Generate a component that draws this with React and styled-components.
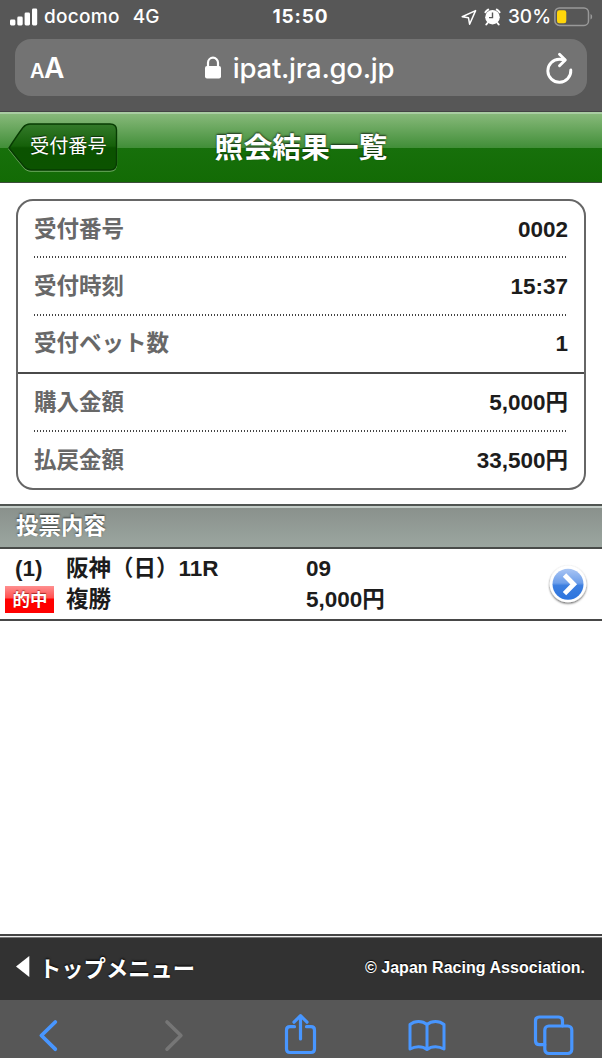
import React from "react";
import styled, { createGlobalStyle } from "styled-components";

const Global = createGlobalStyle`
  * { box-sizing: border-box; }
  html, body { margin: 0; padding: 0; background: #fff; }
  svg { display: block; flex: none; }
`;

const Screen = styled.div`
  width: 602px;
  height: 1058px;
  display: flex;
  flex-direction: column;
  overflow: hidden;
  background: #fff;
  color: #1c1c1c;
  font-family: "Liberation Sans", "Noto Sans CJK JP", sans-serif;
`;

const BrowserTop = styled.div`
  flex: none;
  height: 112px;
  background: #575757;
  border-bottom: 1px solid #444;
  color: #fff;
  font-family: Inter, sans-serif;
`;

const StatusBar = styled.div`
  height: 39px;
  padding: 0 9px 5px 10px;
  display: grid;
  grid-template-columns: 1fr auto 1fr;
  align-items: center;
  font-size: 19px;
  line-height: 24px;
  font-weight: 500;
`;

const StatusGroup = styled.div`
  display: flex;
  align-items: center;
  justify-content: ${(p) => (p.$end ? "flex-end" : "flex-start")};
`;

const StatusText = styled.span`
  margin-left: ${(p) => p.$gap || 0}px;
  letter-spacing: ${(p) => p.$track || 0}px;
  font-weight: ${(p) => (p.$bold ? 700 : 500)};
  white-space: nowrap;
`;

const Clock = styled(StatusText)`
  padding-right: 2px;
`;

const AddressBar = styled.div`
  height: 57px;
  margin: 0 15px;
  padding: 0 14px 0 15px;
  border-radius: 16px;
  background: #737373;
  display: grid;
  grid-template-columns: 60px 1fr 60px;
  align-items: center;
`;

const TextSize = styled.div`
  display: flex;
  align-items: baseline;
  padding-top: 4px;
  font-weight: 600;
  font-size: 28px;
  line-height: 34px;
  letter-spacing: -0.5px;
`;

const SmallA = styled.span`
  font-size: 20px;
`;

const Host = styled.div`
  display: flex;
  align-items: center;
  justify-content: center;
  gap: 12px;
  padding-right: 4px;
  font-size: 27.5px;
  line-height: 36px;
  font-weight: 500;
  letter-spacing: -0.25px;
`;

const Reload = styled.div`
  display: flex;
  justify-content: flex-end;
`;

const Header = styled.header`
  flex: none;
  height: 71px;
  padding-left: 8px;
  border-top: 2px solid #a9cda2;
  border-bottom: 1px solid #3c4c3a;
  background: linear-gradient(#87b97a 0, #418e38 34px, #17700b 34px, #136b05 100%);
  display: grid;
  grid-template-columns: 110px 1fr 118px;
  align-items: center;
`;

const BackButton = styled.button`
  position: relative;
  width: 110px;
  height: 49px;
  margin: 0 0 2px;
  padding: 0;
  border: 0;
  background: none;
  color: #fff;
`;

const BackLabel = styled.span`
  position: absolute;
  left: 22px;
  top: 8px;
  font: 400 19.2px/28px "Noto Sans CJK JP", sans-serif;
  text-shadow: 0 -1px 1px rgba(0, 0, 0, 0.6);
  white-space: nowrap;
`;

const Title = styled.h1`
  margin: 0;
  padding-bottom: 4px;
  text-align: center;
  color: #fff;
  font: 700 28.8px/42px "Noto Sans CJK JP", sans-serif;
  text-shadow: 0 -1px 2px rgba(0, 0, 0, 0.7);
`;

const Summary = styled.dl`
  flex: none;
  height: 291px;
  margin: 16px 16px 14px;
  border: 2px solid #666;
  border-radius: 17px;
`;

const SummaryRow = styled.div`
  height: ${(p) => (p.$first || p.$last ? 57 : 58)}px;
  padding: 0 ${(p) => (p.$divider ? 16 : 0)}px;
  margin: 0 ${(p) => (p.$divider ? 0 : 16)}px;
  border-bottom: ${(p) => (p.$divider ? "2px solid #4a4a4a" : "0")};
  background: ${(p) =>
    p.$last || p.$divider
      ? "none"
      : "linear-gradient(90deg, #444 50%, transparent 50%) 0 100% / 3px 2px repeat-x"};
  display: flex;
  justify-content: space-between;
  align-items: center;
  font-size: 22.5px;
  font-weight: 700;
`;

const Term = styled.dt`
  color: #686868;
  line-height: 34px;
`;

const Value = styled.dd`
  margin: 0;
  line-height: 34px;
`;

const SectionBar = styled.h2`
  flex: none;
  margin: 0;
  height: 45px;
  padding: 0 16px;
  border-top: 2px solid #505552;
  border-bottom: 2px solid #484b49;
  box-shadow: inset 0 2px 0 #c3ccc7;
  background: linear-gradient(#89908b, #9ba6a0);
  color: #fff;
  font: 700 22.5px/37px "Noto Sans CJK JP", sans-serif;
  text-shadow: 0 -1px 2px rgba(0, 0, 0, 0.6);
`;

const BetRow = styled.div`
  flex: none;
  height: 72px;
  padding: 4px 12px 4px 5px;
  border-bottom: 2px solid #484848;
  display: grid;
  grid-template-columns: 61px 240px 1fr 44px;
  grid-template-rows: 31px 31px;
  align-items: center;
  font-size: 22.5px;
  line-height: 30px;
  font-weight: 700;
  white-space: pre;
`;

const BetIndex = styled.div`
  padding-left: 10px;
`;

const HitBadge = styled.div`
  width: 49px;
  height: 27px;
  padding-left: 1px;
  color: #fff;
  background: linear-gradient(#ff8f8f 0, #ff5050 12px, #f00 13px, #f00 100%);
  text-align: center;
  font: 700 17.5px/26px "Noto Sans CJK JP", sans-serif;
  text-shadow: 0 -1px 1px rgba(120, 0, 0, 0.6);
`;

const DetailLink = styled.div`
  grid-column: 4;
  grid-row: 1 / 3;
  padding-top: 2px;
`;

const Spacer = styled.div`
  flex: 1;
`;

const Footer = styled.footer`
  flex: none;
  height: 66px;
  padding: 0 17px 0 16px;
  border-top: 2px solid #444;
  box-shadow: inset 0 1px 0 #eee, inset 0 2px 0 #777;
  background: #323232;
  color: #fff;
  display: flex;
  align-items: center;
  justify-content: space-between;
`;

const TopMenu = styled.div`
  display: flex;
  align-items: center;
  gap: 9px;
  padding-bottom: 3px;
  font: 700 22.3px/34px "Noto Sans CJK JP", sans-serif;
  text-shadow: 0 -1px 2px #000;
`;

const Copyright = styled.small`
  font-size: 16px;
  font-weight: 700;
  line-height: 22px;
  padding-bottom: 1px;
  letter-spacing: 0.03px;
  text-shadow: 0 -1px 1px #000;
`;

const Toolbar = styled.nav`
  flex: none;
  height: 58px;
  padding: 12px 28px 0 28px;
  background: #575757;
  display: flex;
  justify-content: space-between;
`;

const ToolIcon = ({ children, color = "#4896ff", width = 3.2 }) => (
  <svg width="42" height="46" viewBox="0 0 42 46" fill="none" stroke={color} strokeWidth={width} strokeLinecap="round" strokeLinejoin="round">
    {children}
  </svg>
);

const SignalIcon = () => (
  <svg width="28" height="18" viewBox="0 0 28 18" fill="#fff">
    <rect x="0" y="11.500" width="5.400" height="6" rx="1.400" />
    <rect x="7.300" y="8.500" width="5.400" height="9" rx="1.400" />
    <rect x="14.600" y="4.500" width="5.400" height="13" rx="1.400" />
    <rect x="22" y="0.500" width="5.200" height="17" rx="1.400" />
  </svg>
);

const LocationIcon = () => (
  <svg width="16" height="17" viewBox="0 0 16 17" fill="none" stroke="#fff" strokeWidth="1.5" strokeLinejoin="round">
    <path d="M14.600 1.600 1.200 7.800 7.500 8.800 8.600 15.200Z" />
  </svg>
);

const AlarmIcon = () => (
  <svg width="17" height="18" viewBox="0 0 17 18">
    <circle cx="8.500" cy="9.200" r="7.300" fill="#fff" />
    <path d="M1.400 4.200A8 8 0 0 1 4.200 1.600M15.600 4.200A8 8 0 0 0 12.800 1.600M3.500 15 2.300 16.500M13.500 15 14.700 16.500" stroke="#fff" strokeWidth="2" strokeLinecap="round" fill="none" />
    <path d="M8.500 4.600V9.600H5" stroke="#575757" strokeWidth="1.400" fill="none" />
  </svg>
);

const BatteryIcon = () => (
  <svg width="39" height="20" viewBox="0 0 39 20">
    <rect x="0.900" y="0.900" width="33.600" height="17.500" rx="4.500" fill="none" stroke="#999" strokeWidth="1.5" />
    <rect x="3" y="3.200" width="9.300" height="13" rx="2.200" fill="#ffd60a" />
    <path d="M36.500 7v5.400c2.200-.6 2.200-4.800 0-5.400Z" fill="#999" />
  </svg>
);

const LockIcon = () => (
  <svg width="16" height="24" viewBox="0 0 16 24">
    <rect x="0" y="10" width="16" height="12.600" rx="2" fill="#fff" />
    <path d="M3 11V6.700a5 5 0 0 1 10 0V11" fill="none" stroke="#fff" strokeWidth="2.200" />
  </svg>
);

const ReloadIcon = () => (
  <svg width="28" height="32" viewBox="0 0 28 32" fill="none" stroke="#fff" strokeWidth="2.900" strokeLinecap="round" strokeLinejoin="round">
    <path d="M25.800 18A11.500 11.500 0 1 1 14.300 7.200Q17.200 7.200 19.700 7.900" />
    <path d="M14.500 2.200 20.300 8 14.500 13.800" />
  </svg>
);

const BackShape = () => (
  <svg width="110" height="49" viewBox="0 0 110 49">
    <defs>
      <linearGradient id="back-fill" x1="0" y1="0" x2="0" y2="1">
        <stop offset="0" stopColor="#347a2a" />
        <stop offset="0.48" stopColor="#156009" />
        <stop offset="0.52" stopColor="#0b5200" />
        <stop offset="1" stopColor="#0b5300" />
      </linearGradient>
    </defs>
    <path d="M1 26Q9 13.500 15 5.500 18 2 22 2H102Q108.500 2 108.500 8V41Q108.500 48 102 48H23Q19 48 16 44.500 8 35 1 26Z" fill="none" stroke="#72ac65" strokeWidth="1.400" />
    <path d="M1 25Q9 12.500 15 4.500 18 1 22 1H102Q108.500 1 108.500 7V40Q108.500 47 102 47H23Q19 47 16 43.500 8 34 1 25Z" fill="url(#back-fill)" stroke="#073b02" strokeWidth="1.400" />
  </svg>
);

const DetailIcon = () => (
  <svg width="44" height="44" viewBox="0 0 44 44">
    <defs>
      <linearGradient id="detail-fill" x1="0" y1="0" x2="0" y2="1">
        <stop offset="0" stopColor="#a9c5f4" />
        <stop offset="0.46" stopColor="#6e9fea" />
        <stop offset="0.54" stopColor="#3d7fe0" />
        <stop offset="1" stopColor="#2c74de" />
      </linearGradient>
      <filter id="detail-shadow" x="-20%" y="-20%" width="140%" height="150%">
        <feDropShadow dx="0" dy="1.200" stdDeviation="1.300" floodColor="#000" floodOpacity="0.65" />
      </filter>
    </defs>
    <circle cx="22" cy="21" r="18.300" fill="#fff" filter="url(#detail-shadow)" />
    <circle cx="22" cy="21.200" r="15.500" fill="url(#detail-fill)" />
    <path d="M18.500 12 27.700 21.300 18.500 30.600" fill="none" stroke="#fff" strokeWidth="4.800" />
  </svg>
);

const TriangleIcon = () => (
  <svg width="14" height="21" viewBox="0 0 14 21">
    <path d="M0 10.500 13.300 0V21Z" fill="#fff" />
  </svg>
);

const rows = [
  { term: "受付番号", value: "0002", first: true },
  { term: "受付時刻", value: "15:37" },
  { term: "受付ベット数", value: "1", divider: true },
  { term: "購入金額", value: "5,000円" },
  { term: "払戻金額", value: "33,500円", last: true },
];

export default function App() {
  return (
    <Screen>
      <Global />
      <BrowserTop>
        <StatusBar>
          <StatusGroup>
            <SignalIcon />
            <StatusText $gap={6} $track={0.3}>docomo</StatusText>
            <StatusText $gap={13}>4G</StatusText>
          </StatusGroup>
          <Clock $bold $track={0.9}>15:50</Clock>
          <StatusGroup $end>
            <LocationIcon />
            <StatusText $gap={7}><AlarmIcon /></StatusText>
            <StatusText $gap={7}>30%</StatusText>
            <StatusText $gap={3}><BatteryIcon /></StatusText>
          </StatusGroup>
        </StatusBar>
        <AddressBar>
          <TextSize><SmallA>A</SmallA>A</TextSize>
          <Host><LockIcon />ipat.jra.go.jp</Host>
          <Reload><ReloadIcon /></Reload>
        </AddressBar>
      </BrowserTop>

      <Header>
        <BackButton>
          <BackShape />
          <BackLabel>受付番号</BackLabel>
        </BackButton>
        <Title>照会結果一覧</Title>
      </Header>

      <Summary>
        {rows.map((r) => (
          <SummaryRow key={r.term} $first={r.first} $divider={r.divider} $last={r.last}>
            <Term>{r.term}</Term>
            <Value>{r.value}</Value>
          </SummaryRow>
        ))}
      </Summary>

      <SectionBar>投票内容</SectionBar>
      <BetRow>
        <BetIndex>(1)</BetIndex>
        <div>阪神（日）11R</div>
        <div>09</div>
        <DetailLink><DetailIcon /></DetailLink>
        <HitBadge>的中</HitBadge>
        <div>複勝</div>
        <div>5,000円</div>
      </BetRow>

      <Spacer />

      <Footer>
        <TopMenu><TriangleIcon />トップメニュー</TopMenu>
        <Copyright>© Japan Racing Association.</Copyright>
      </Footer>

      <Toolbar>
        <ToolIcon width={3.800}><path d="M27.300 10 13.400 23.500 27.300 37.200" /></ToolIcon>
        <ToolIcon width={3.600} color="#767676"><path d="M13 10 26.900 23.500 13 37.200" /></ToolIcon>
        <ToolIcon>
          <path d="M14.500 14.700H10Q6.500 14.700 6.500 18.200V37Q6.500 40.500 10 40.500H31Q34.500 40.500 34.500 37V18.200Q34.500 14.700 31 14.700H26.500" />
          <path d="M20.500 27V4M14 10.200 20.500 3.700 27 10.200" />
        </ToolIcon>
        <ToolIcon width={3}>
          <path d="M21 12.500Q17.500 9.500 12.500 9.500 7.500 9.500 4 12.500V37Q8 34.700 12.500 34.700 17.500 34.700 21 37.500 24.500 34.700 29.500 34.700 34 34.700 38 37V12.500Q34.500 9.500 29.500 9.500 24.500 9.500 21 12.500V37.500" />
        </ToolIcon>
        <ToolIcon>
          <path d="M12.800 32.700H7.500Q3.500 32.700 3.500 28.700V9Q3.500 5 7.500 5H26.500Q30.500 5 30.500 9V13.800" />
          <rect x="12.800" y="14" width="27" height="27.500" rx="4" />
        </ToolIcon>
      </Toolbar>
    </Screen>
  );
}
